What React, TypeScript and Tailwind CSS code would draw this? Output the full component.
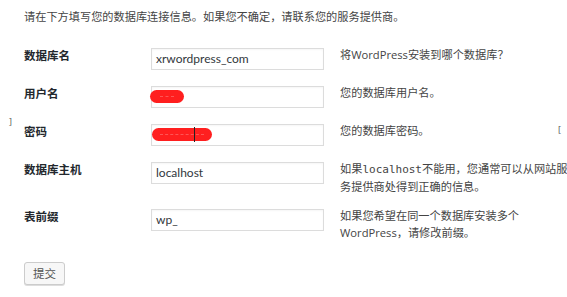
const font = {
  fontFamily: '"Open Sans", "Noto Sans CJK SC", sans-serif',
};

interface RowProps {
  label: string;
  value?: string;
  help: React.ReactNode;
  blob?: "short" | "long";
  className?: string;
}

function Row({ label, value, help, blob, className }: RowProps) {
  return (
    <div className={`flex items-start ${className ?? ""}`}>
      <div className="w-[127px] shrink-0 text-[11.5px] leading-[16px] font-bold text-[#23282d]">
        {label}
      </div>
      <div className="relative w-[173px] h-[22px] shrink-0 border border-[#dcdcdc] bg-white shadow-[inset_0_1px_2px_rgba(0,0,0,0.04)] flex items-center pl-[4px] text-[#32373c]">
        <span style={{ fontFamily: '"Lato", "Open Sans", sans-serif' }} className="text-[12px]">
          {value}
        </span>
        {blob === "short" && (
          <span className="absolute left-[-2px] top-[3px] w-[34px] h-[13px] rounded-full bg-[#ff1f1f] flex items-center justify-center">
            <span className="w-[14px] border-t border-dashed border-[#ff5555]" />
          </span>
        )}
        {blob === "long" && (
          <>
            <span className="absolute left-0 top-[3px] w-[60px] h-[13px] rounded-full bg-[#ff1f1f] flex items-center justify-center">
              <span className="w-[44px] border-t border-dashed border-[#ff5555]" />
            </span>
            <span className="absolute left-[42px] top-[2px] w-px h-[15px] bg-[#222]" />
          </>
        )}
      </div>
      <div className="ml-[16px] -mt-[1px] text-[11.2px] leading-[16.5px] text-[#444] w-[230px]">
        {help}
      </div>
    </div>
  );
}

export default function App() {
  return (
    <div
      className="relative w-[567px] h-[297px] bg-white overflow-hidden pl-6 pt-[9px]"
      style={font}
    >
      <p className="text-[11.2px] leading-[16px] text-[#444]">
        请在下方填写您的数据库连接信息。如果您不确定，请联系您的服务提供商。
      </p>

      <div className="mt-[17px]">
        <Row
          className="pt-[6px] pb-[10px]"
          label="数据库名"
          value="xrwordpress_com"
          help="将WordPress安装到哪个数据库？"
        />
        <Row
          className="pt-[6px] pb-[10px]"
          label="用户名"
          blob="short"
          help="您的数据库用户名。"
        />
        <Row
          className="pt-[6px] pb-[10px]"
          label="密码"
          blob="long"
          help="您的数据库密码。"
        />
        <Row
          className="pt-[6px] pb-[8px]"
          label="数据库主机"
          value="localhost"
          help={
            <span className="whitespace-nowrap">
              如果
              <code
                className="text-[11px]"
                style={{ fontFamily: '"DejaVu Sans Mono", "Liberation Mono", monospace' }}
              >
                localhost
              </code>
              不能用，您通常可以从网站服
              <br />
              务提供商处得到正确的信息。
            </span>
          }
        />
        <Row
          className="pt-[6px]"
          label="表前缀"
          value="wp_"
          help={
            <>
              如果您希望在同一个数据库安装多个
              <br />
              WordPress，请修改前缀。
            </>
          }
        />
      </div>

      <button className="mt-[21px] w-[41px] h-[23px] rounded-[3px] border border-[#cccccc] bg-[#f7f7f7] shadow-[0_1px_0_#ddd] text-[11.5px] text-[#555] flex items-center justify-center">
        提交
      </button>

      {/* crop marks from the capture */}
      <span className="absolute left-[9px] top-[117px] text-[9px] leading-none text-[#555]">]</span>
      <span className="absolute left-[558px] top-[125px] text-[9px] leading-none text-[#555]">[</span>
    </div>
  );
}
